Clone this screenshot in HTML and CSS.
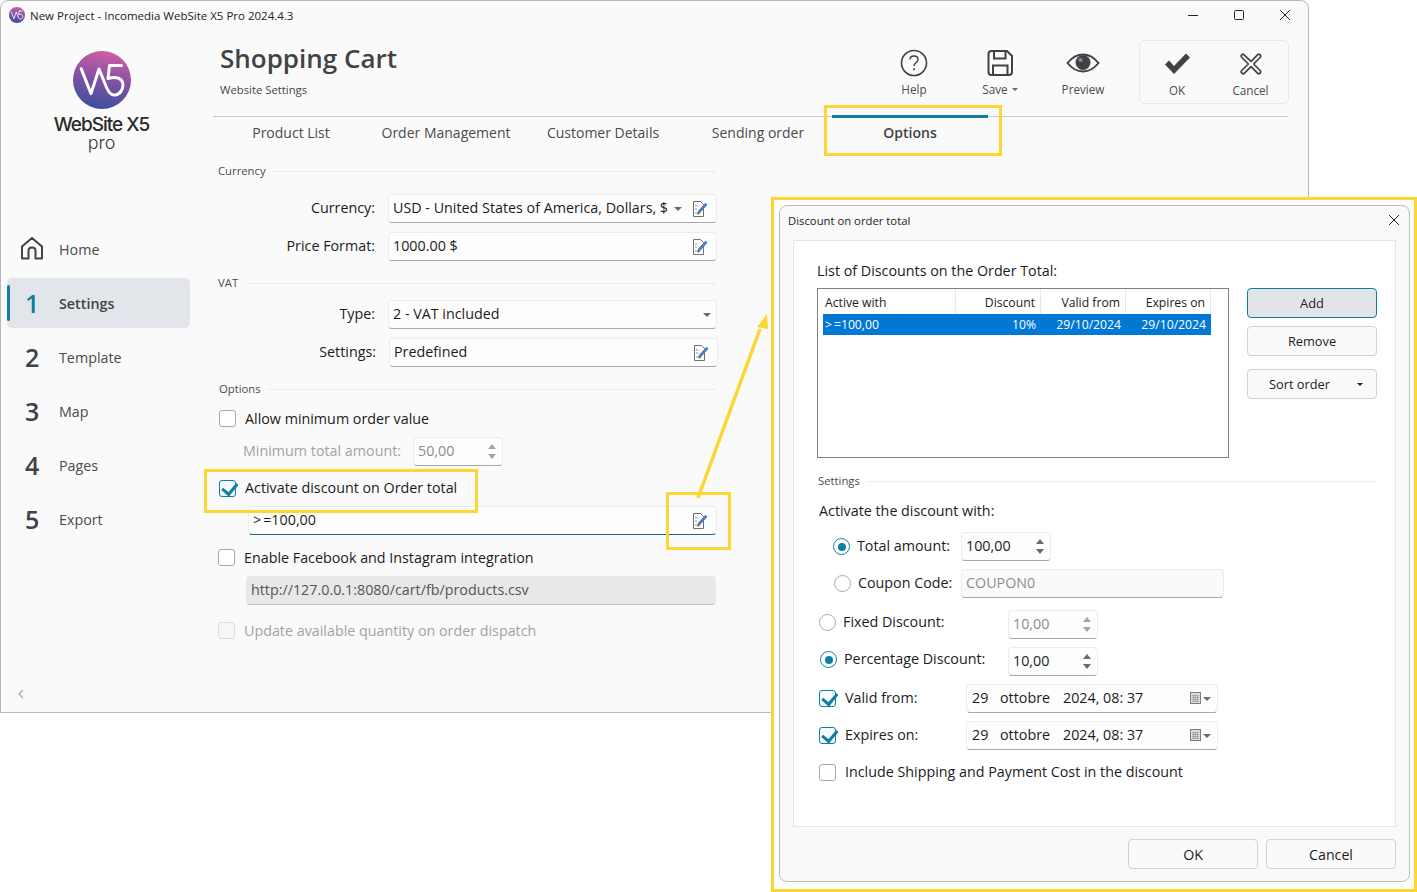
FILE: index.html
```html
<!DOCTYPE html>
<html lang="en">
<head>
<meta charset="utf-8">
<title>Incomedia WebSite X5 Pro</title>
<link rel="stylesheet" href="styles.css">
</head>
<body>
<svg class="defs" width="0" height="0" aria-hidden="true">
  <defs>
    <linearGradient id="logoGrad" x1="0.6" y1="0" x2="0.4" y2="1">
      <stop offset="0" stop-color="#d45da3"/>
      <stop offset="0.5" stop-color="#7f52a3"/>
      <stop offset="1" stop-color="#3b4f9e"/>
    </linearGradient>
    <symbol id="mark" viewBox="0 0 58 58">
      <circle cx="29" cy="29" r="29" fill="url(#logoGrad)"/>
      <path d="M8.200 17.700L18 42.600L26 18L33.800 37C36 42 39 44.500 42 44C47 43.500 50 38.500 50 34C50 28 44 24.500 35 27.500L36.500 14.500H48.500" fill="none" stroke="#fff" stroke-width="3" stroke-linecap="round" stroke-linejoin="round"/>
    </symbol>
    <symbol id="edit" viewBox="0 0 18 18">
      <path d="M2.500 1.500H9.500L12.500 4.500V16.500H2.500Z" fill="#fff" stroke="#707070"/>
      <path d="M4 6H6.500M4 9H6M4 13H7" stroke="#8f8f8f" fill="none"/>
      <path d="M7.500 12.500L15.500 3.800" stroke="#4f80bb" stroke-width="2.800" fill="none"/>
      <path d="M6.500 14.500L7 12L8.800 13.700Z" fill="#3b3b3b"/>
    </symbol>
    <symbol id="cal" viewBox="0 0 12 13">
      <rect x="0.500" y="0.500" width="10" height="11" fill="#dcdcdc" stroke="#7d7d7d"/>
      <path d="M2 3.500H9M2 5.500H9M2 7.500H9M2 9.500H9M3.500 3V10M5.500 3V10M7.500 3V10" stroke="#9a9a9a" stroke-width="0.700"/>
    </symbol>
  </defs>
</svg>

<div class="window">
  <header class="titlebar">
    <svg class="title-icon"><use href="#mark"/></svg>
    <span class="title-text">New Project - Incomedia WebSite X5 Pro 2024.4.3</span>
    <div class="win-controls">
      <svg width="12" height="12" viewBox="0 0 12 12"><path d="M1 6.500H11" stroke="#222" fill="none"/></svg>
      <svg width="12" height="12" viewBox="0 0 12 12"><rect x="1.500" y="1.500" width="9" height="9" rx="1" fill="none" stroke="#222"/></svg>
      <svg width="12" height="12" viewBox="0 0 12 12"><path d="M1 1L11 11M11 1L1 11" stroke="#222" fill="none"/></svg>
    </div>
  </header>

  <div class="body">
    <aside class="sidebar">
      <div class="brand">
        <svg class="brand-mark"><use href="#mark"/></svg>
        <div class="brand-name">WebSite X5</div>
        <div class="brand-sub">pro</div>
      </div>
      <nav class="nav">
        <a class="nav-item"><span class="nav-num nav-home"><svg width="24" height="25" viewBox="0 0 24 25"><path d="M2 22.500V10.500L12 2L22 10.500V22.500H15.500V14.500C15.500 12.500 14 11.500 12 11.500C10 11.500 8.500 12.500 8.500 14.500V22.500Z" fill="none" stroke="#3f4347" stroke-width="2" stroke-linejoin="round"/></svg></span><span>Home</span></a>
        <a class="nav-item active"><span class="nav-num">1</span><span>Settings</span></a>
        <a class="nav-item"><span class="nav-num">2</span><span>Template</span></a>
        <a class="nav-item"><span class="nav-num">3</span><span>Map</span></a>
        <a class="nav-item"><span class="nav-num">4</span><span>Pages</span></a>
        <a class="nav-item"><span class="nav-num">5</span><span>Export</span></a>
      </nav>
      <svg class="collapse" width="8" height="10" viewBox="0 0 8 10"><path d="M6 1L2 5L6 9" fill="none" stroke="#a8a8a8" stroke-width="1.300"/></svg>
    </aside>

    <main class="main">
      <div class="head">
        <div class="head-titles">
          <h1>Shopping Cart</h1>
          <p>Website Settings</p>
        </div>
        <div class="tools">
          <div class="tool tool-help">
            <svg width="30" height="30" viewBox="0 0 30 30"><circle cx="15" cy="15" r="12.500" fill="none" stroke="#3f4347" stroke-width="1.600"/><path d="M11 11.500C11 9 13 8 15 8C17.500 8 19 9.500 19 11.500C19 14.500 15 14.500 15 18" fill="none" stroke="#3f4347" stroke-width="1.500"/><circle cx="15" cy="21.300" r="1.100" fill="#3f4347"/></svg>
            <span>Help</span>
          </div>
          <div class="tool tool-save">
            <svg width="30" height="30" viewBox="0 0 30 30"><path d="M3.500 6C3.500 4 4.500 3 6.500 3H22L27 8V24C27 26 26 27 24 27H6.500C4.500 27 3.500 26 3.500 24Z" fill="none" stroke="#3f4347" stroke-width="2"/><path d="M9 3.500V10.500H20.500V3.500M8 26.500V17.500H22.500V26.500" fill="none" stroke="#3f4347" stroke-width="2"/></svg>
            <span>Save <i class="caret caret-grey"></i></span>
          </div>
          <div class="tool tool-preview">
            <svg width="34" height="30" viewBox="0 0 34 30"><path d="M1.500 15C7 8 12 6.500 17 6.500C22 6.500 27 8 32.500 15C27 22 22 23.500 17 23.500C12 23.500 7 22 1.500 15Z" fill="none" stroke="#3f4347" stroke-width="2"/><circle cx="17" cy="14.500" r="7.500" fill="#3f4347"/><circle cx="14.500" cy="12" r="2" fill="#8a8d90"/></svg>
            <span>Preview</span>
          </div>
          <div class="tool-group">
            <div class="tool tool-ok">
              <svg width="30" height="30" viewBox="0 0 30 30"><path d="M3 15.500L7 11.500L12 17L24 4.500L28 8.500L12 25Z" fill="#3f4347"/></svg>
              <span>OK</span>
            </div>
            <div class="tool tool-cancel">
              <svg width="30" height="30" viewBox="0 0 30 30"><path transform="translate(1.500 1.500) scale(0.900)" d="M7 4.500L15 12L22.500 4.500C24 3 27 6 25.500 7.500L18 15L25.500 22.500C27 24 24 27 22.500 25.500L15 18L7.500 25.500C6 27 3 24 4.500 22.500L12 15L4.500 7.500C3 6 5.500 3 7 4.500Z" fill="none" stroke="#3f4347" stroke-width="1.900" stroke-linejoin="round"/></svg>
              <span>Cancel</span>
            </div>
          </div>
        </div>
      </div>

      <div class="tabs">
        <div class="tab">Product List</div>
        <div class="tab">Order Management</div>
        <div class="tab">Customer Details</div>
        <div class="tab">Sending order</div>
        <div class="tab active">Options</div>
      </div>

      <div class="form">
        <div class="section section-currency"><span>Currency</span></div>
        <div class="form-row row-a">
          <label>Currency:</label>
          <div class="field"><span class="grow">USD - United States of America, Dollars, $</span><i class="caret caret-grey caret-near"></i><svg class="edit-icon"><use href="#edit"/></svg></div>
        </div>
        <div class="form-row row-b">
          <label>Price Format:</label>
          <div class="field"><span class="grow">1000.00 $</span><svg class="edit-icon"><use href="#edit"/></svg></div>
        </div>
        <div class="section section-vat"><span>VAT</span></div>
        <div class="form-row row-b">
          <label>Type:</label>
          <div class="field"><span class="grow">2 - VAT included</span><i class="caret caret-grey caret-end"></i></div>
        </div>
        <div class="form-row row-b row-shift">
          <label>Settings:</label>
          <div class="field"><span class="grow">Predefined</span><svg class="edit-icon"><use href="#edit"/></svg></div>
        </div>
        <div class="section section-options"><span>Options</span></div>

        <div class="check-row row-min">
          <i class="cb"></i><span>Allow minimum order value</span>
        </div>
        <div class="min-row">
          <label>Minimum total amount:</label>
          <div class="field spin muted"><span class="grow">50,00</span><i class="arrows"></i></div>
        </div>
        <div class="check-row row-activate">
          <i class="cb on"></i><span>Activate discount on Order total</span>
        </div>
        <div class="field wide focus"><span class="grow"><span class="gt">&gt;</span>=100,00</span><svg class="edit-icon"><use href="#edit"/></svg></div>
        <div class="check-row row-fb">
          <i class="cb"></i><span>Enable Facebook and Instagram integration</span>
        </div>
        <div class="field url"><span class="grow">http://127.0.0.1:8080/cart/fb/products.csv</span></div>
        <div class="check-row row-update disabled">
          <i class="cb"></i><span>Update available quantity on order dispatch</span>
        </div>
      </div>
    </main>
  </div>
</div>

<div class="mark-box mark-tab"></div>
<div class="mark-box mark-check"></div>
<div class="mark-box mark-edit"></div>
<svg class="arrow" width="90" height="190" viewBox="0 0 90 190">
  <path d="M3 188L65 19" fill="none" stroke="#fdd632" stroke-width="3.500"/>
  <path d="M72 4L73 19L62 17Z" fill="#fdd632"/>
</svg>

<div class="frame">
  <section class="dialog">
    <header class="dlg-title">
      <span>Discount on order total</span>
      <svg width="12" height="12" viewBox="0 0 12 12"><path d="M1 1L11 11M11 1L1 11" stroke="#222" fill="none"/></svg>
    </header>
    <div class="panel">
      <div class="list-title">List of Discounts on the Order Total:</div>
      <div class="list-wrap">
        <div class="list">
          <div class="list-row list-head">
            <span>Active with</span><span>Discount</span><span>Valid from</span><span>Expires on</span>
          </div>
          <div class="list-row list-sel">
            <span><span class="gt">&gt;</span>=100,00</span><span>10%</span><span>29/10/2024</span><span>29/10/2024</span>
          </div>
        </div>
        <div class="list-btns">
          <button class="btn btn-add">Add</button>
          <button class="btn btn-remove">Remove</button>
          <button class="btn btn-sort"><span>Sort order</span><i class="caret caret-dark"></i></button>
        </div>
      </div>
      <div class="section section-dlg"><span>Settings</span></div>
      <div class="activate-title">Activate the discount with:</div>

      <div class="opt opt-total">
        <i class="radio on"></i><label>Total amount:</label>
        <div class="field spin"><span class="grow">100,00</span><i class="arrows"></i></div>
      </div>
      <div class="opt opt-coupon">
        <i class="radio"></i><label>Coupon Code:</label>
        <div class="field coupon"><span class="grow">COUPON0</span></div>
      </div>
      <div class="opt opt-fixed">
        <i class="radio"></i><label>Fixed Discount:</label>
        <div class="field spin muted"><span class="grow">10,00</span><i class="arrows"></i></div>
      </div>
      <div class="opt opt-percent">
        <i class="radio on"></i><label>Percentage Discount:</label>
        <div class="field spin"><span class="grow">10,00</span><i class="arrows"></i></div>
      </div>
      <div class="opt opt-valid">
        <i class="cb on"></i><label>Valid from:</label>
        <div class="field date"><span class="grow date-parts"><span>29</span><span>ottobre</span><span>2024, 08: 37</span></span><svg class="cal-icon"><use href="#cal"/></svg><i class="caret caret-grey"></i></div>
      </div>
      <div class="opt opt-expires">
        <i class="cb on"></i><label>Expires on:</label>
        <div class="field date"><span class="grow date-parts"><span>29</span><span>ottobre</span><span>2024, 08: 37</span></span><svg class="cal-icon"><use href="#cal"/></svg><i class="caret caret-grey"></i></div>
      </div>
      <div class="opt opt-include">
        <i class="cb"></i><label>Include Shipping and Payment Cost in the discount</label>
      </div>
    </div>
    <footer class="dlg-foot">
      <button class="btn btn-foot">OK</button>
      <button class="btn btn-foot">Cancel</button>
    </footer>
  </section>
</div>
</body>
</html>
```

FILE: styles.css
```css
* { box-sizing: border-box; }
html, body { margin: 0; padding: 0; }
body {
  position: relative;
  width: 1417px;
  height: 892px;
  overflow: hidden;
  background: #fff;
  font-family: "Open Sans", "Noto Sans", sans-serif;
  font-size: 14.300px;
  color: #1c1c1c;
}
.defs { position: absolute; }
i { display: block; font-style: normal; flex: none; }
label { display: block; }
.gt { margin-right: 2px; }

/* main window */
.window {
  position: absolute;
  left: 0;
  top: 0;
  width: 1309px;
  height: 713px;
  display: flex;
  flex-direction: column;
  background: #fafafa;
  border: 1px solid #b9b9b9;
  border-radius: 8px 8px 0 0;
}
.titlebar {
  flex: none;
  height: 31px;
  display: flex;
  align-items: center;
  padding: 0 0 3px 8px;
}
.title-icon { width: 16px; height: 16px; margin-right: 5px; }
.title-text { font-size: 11.500px; color: #222; }
.win-controls {
  margin-left: auto;
  display: flex;
  gap: 34px;
  padding-right: 17px;
}
.body { flex: 1; display: flex; min-height: 0; }

/* sidebar */
.sidebar {
  position: relative;
  flex: none;
  width: 212px;
  display: flex;
  flex-direction: column;
  padding: 0 23px 0 6px;
}
.brand {
  height: 192px;
  display: flex;
  flex-direction: column;
  align-items: center;
  padding-top: 19px;
  margin-left: 6px;
}
.brand-mark { flex: none; width: 58px; height: 58px; }
.brand-name {
  margin-top: 5px;
  font-family: Inter, "Open Sans", sans-serif;
  font-size: 19px;
  font-weight: 500;
  letter-spacing: -1px;
  line-height: 22px;
  color: #2a2a2a;
}
.brand-sub {
  font-family: Inter, "Open Sans", sans-serif;
  font-size: 18px;
  font-weight: 300;
  line-height: 14px;
  color: #3a3a3a;
}
.nav { display: flex; flex-direction: column; gap: 4px; }
.nav-item {
  position: relative;
  display: flex;
  align-items: center;
  height: 50px;
  border-radius: 5px;
  color: #4b4b4b;
  font-size: 14.300px;
}
.nav-num {
  flex: none;
  width: 52px;
  padding-left: 18px;
  font-size: 25px;
  font-weight: 600;
  color: #3f4347;
  line-height: 30px;
}
.nav-home { padding-left: 13px; }
.nav-num svg { display: block; margin-top: -2px; }
.nav-item.active { background: #e2e6ea; font-weight: 600; color: #3f4347; }
.nav-item.active .nav-num { color: #0f7ea5; font-weight: 600; }
.nav-item.active::before {
  content: "";
  position: absolute;
  left: 0;
  top: 7px;
  bottom: 7px;
  width: 3px;
  border-radius: 2px;
  background: #0f7ea5;
}
.collapse { position: absolute; left: 16px; bottom: 13px; }

/* main column */
.main { flex: 1; min-width: 0; padding-right: 20px; }
.head { height: 84px; display: flex; justify-content: space-between; }
.head-titles { padding-left: 7px; }
h1 {
  margin: 7px 0 0;
  font-size: 26px;
  font-weight: 600;
  line-height: 38px;
  color: #3f4347;
}
.head-titles p { margin: 5px 0 0; font-size: 11.300px; line-height: 16px; color: #444; }
.tools { display: flex; padding-top: 8px; margin-right: -1px; }
.tool {
  display: flex;
  flex-direction: column;
  align-items: center;
  height: 63px;
  padding-top: 8px;
  font-size: 11.700px;
  color: #4b4b4b;
}
.tool svg { display: block; height: 30px; }
.tool span { display: flex; align-items: center; gap: 4px; margin-top: 2px; line-height: 18px; }
.tool-help, .tool-save { width: 86px; }
.tool-preview { width: 80px; margin-right: 16px; }
.tool-group {
  display: flex;
  width: 150px;
  height: 64px;
  border: 1px solid #e9e9e9;
  border-radius: 5px;
}
.tool-ok { width: 74px; }
.tool-cancel { width: 73px; }

/* tabs */
.tabs { display: flex; height: 34px; border-top: 1px solid #c9c9c9; }
.tab {
  position: relative;
  display: flex;
  align-items: center;
  justify-content: center;
  height: 31px;
  font-size: 14px;
  color: #4b4b4b;
}
.tab:nth-child(1) { width: 156px; }
.tab:nth-child(2) { width: 154px; }
.tab:nth-child(3) { width: 160px; }
.tab:nth-child(4) { width: 150px; }
.tab:nth-child(5) { width: 154px; }
.tab.active { font-weight: 600; color: #3f4347; }
.tab.active::before {
  content: "";
  position: absolute;
  left: -1px;
  right: -1px;
  top: -2px;
  height: 3px;
  background: #0f7ea5;
}

/* form column */
.form { width: 498px; margin-left: 5px; }
.section { display: flex; align-items: center; height: 16px; font-size: 11.300px; color: #4b4b4b; }
.section span { margin-top: -2px; }
.section::after { content: ""; flex: 1; height: 1px; margin-left: 8px; background: #ebebeb; }
.section-currency { margin-top: 13px; }
.section-vat { margin-top: 14px; }
.section-options { margin-top: 14px; margin-left: 1px; }
.form-row { display: flex; align-items: center; }
.form-row label { flex: none; width: 157px; margin-right: 13px; padding-bottom: 2px; text-align: right; }
.form-row .field { width: 329px; flex: none; }
.row-a { margin-top: 15px; }
.row-b { margin-top: 9px; }
.row-shift { padding-left: 1px; }

.field {
  display: flex;
  align-items: center;
  height: 29px;
  padding: 0 10px 0 4px;
  background: #fdfdfd;
  border: 1px solid #ececec;
  border-bottom-color: #a8a8a8;
  border-radius: 4px;
}
.grow { flex: 1; min-width: 0; padding-bottom: 2px; white-space: nowrap; }
.edit-icon { width: 18px; height: 18px; margin-right: -3px; }
.caret {
  width: 0;
  height: 0;
  border-left: 4px solid transparent;
  border-right: 4px solid transparent;
  border-top: 4px solid #666;
}
.caret-grey { border-top-color: #6a6a6a; }
.caret-dark { border-left-width: 3px; border-right-width: 3px; border-top: 3px solid #222; }
.tool .caret { border-left-width: 3px; border-right-width: 3px; border-top-width: 3px; }
.caret-near { margin-right: 9px; margin-left: -1px; }
.caret-end { margin-right: -5px; }

.check-row { display: flex; align-items: center; height: 17px; }
.check-row span { margin-left: 9px; white-space: nowrap; }
.cb {
  position: relative;
  width: 17px;
  height: 17px;
  background: #fff;
  border: 1px solid #a9a9a9;
  border-radius: 3px;
}
.cb.on { border-color: #0f7ea5; background: #f7fbfd; }
.cb.on::after {
  content: "";
  position: absolute;
  left: 4.500px;
  top: -1px;
  width: 7px;
  height: 11.500px;
  border: solid #0f7ea5;
  border-width: 0 3px 3px 0;
  transform: rotate(40deg);
}
.row-min { margin-top: 13px; margin-left: 1px; }
.min-row { display: flex; align-items: center; margin-top: 10px; margin-left: 25px; }
.min-row label { width: 170px; padding-bottom: 2px; color: #a2a2a2; white-space: nowrap; }
.spin { width: 90px; padding-right: 0; }
.muted { color: #8d8d8d; }
.arrows { position: relative; width: 20px; height: 100%; }
.arrows::before, .arrows::after {
  content: "";
  position: absolute;
  left: 6px;
  width: 0;
  height: 0;
  border-left: 4px solid transparent;
  border-right: 4px solid transparent;
}
.arrows::before { top: 6px; border-bottom: 5px solid #6a6a6a; }
.arrows::after { bottom: 6px; border-top: 5px solid #6a6a6a; }
.muted .arrows::before { border-bottom-color: #a5a5a5; }
.muted .arrows::after { border-top-color: #a5a5a5; }
.row-activate { margin-top: 14px; margin-left: 1px; }
.row-activate span { margin-bottom: 2px; }
.wide { margin: 9px 0 0 30px; width: 469px; }
.focus { border-bottom: 1px solid #0f6e8f; }
.row-fb { margin-top: 14px; }
.url { margin: 10px 0 0 28px; width: 470px; background: #e8e8e8; border-color: #e8e8e8; border-bottom-color: #c4c4c4; color: #555; }
.row-update { margin-top: 17px; }
.disabled { color: #a2a2a2; }
.disabled .cb { background: #f6f6f6; border-color: #dcdcdc; }

/* annotations */
.mark-box { position: absolute; border: 3px solid #fdd632; }
.mark-tab { left: 824px; top: 105px; width: 178px; height: 51px; }
.mark-check { left: 204px; top: 469px; width: 274px; height: 44px; }
.mark-edit { left: 666px; top: 492px; width: 65px; height: 58px; }
.arrow { position: absolute; left: 695px; top: 310px; }

/* dialog */
.frame {
  position: absolute;
  left: 771px;
  top: 197px;
  width: 646px;
  height: 695px;
  padding: 5px 4px 7px 5px;
  background: #fff;
  border: 3px solid #fdd632;
}
.dialog {
  display: flex;
  flex-direction: column;
  height: 100%;
  background: #f9f9f9;
  border: 1px solid #bcbcbc;
  border-radius: 8px;
}
.dlg-title {
  flex: none;
  height: 34px;
  display: flex;
  align-items: center;
  justify-content: space-between;
  padding: 0 9px 6px 8px;
  font-size: 11.300px;
}
.panel {
  flex: none;
  height: 587px;
  margin: 0 13px;
  padding-left: 23px;
  background: #fff;
  border: 1px solid #e6e6e6;
}
.list-title { margin-top: 21px; height: 18px; line-height: 18px; }
.list-wrap { display: flex; gap: 18px; margin-top: 8px; }
.list {
  width: 412px;
  height: 170px;
  padding: 0 17px 0 5px;
  background: #fff;
  border: 1px solid #808080;
  font-size: 12.200px;
}
.list-row {
  display: grid;
  grid-template-columns: 133px 85px 85px 85px;
  align-items: center;
}
.list-row > span { padding-right: 5px; text-align: right; white-space: nowrap; }
.list-row > span:first-child { padding-left: 2px; text-align: left; }
.list-head { height: 25px; }
.list-head > span { line-height: 27px; height: 25px; border-right: 1px solid #e8e8e8; }
.list-sel { height: 21px; background: #0078d4; color: #fff; }
.list-btns { display: flex; flex-direction: column; width: 130px; }
.btn {
  display: flex;
  align-items: center;
  justify-content: center;
  height: 30px;
  padding: 0;
  background: #fafafa;
  border: 1px solid #d2d2d2;
  border-radius: 4px;
  font-family: inherit;
  font-size: 12.800px;
  color: #1c1c1c;
}
.btn-add { background: #e1e5e9; border-color: #0f7ea5; }
.btn-remove { margin-top: 8px; }
.btn-sort { margin-top: 13px; justify-content: space-between; padding: 0 13px 0 21px; }
.section-dlg { margin: 15px 18px 0 1px; }
.activate-title { margin: 13px 0 0 2px; height: 18px; line-height: 18px; }
.opt { display: flex; align-items: center; height: 29px; }
.opt label { padding-bottom: 2px; white-space: nowrap; }
.opt .radio, .opt .cb { margin-right: 7px; }
.radio {
  position: relative;
  width: 17px;
  height: 17px;
  background: #fff;
  border: 1px solid #a9a9a9;
  border-radius: 50%;
}
.radio.on { border-color: #0f7ea5; }
.radio.on::after {
  content: "";
  position: absolute;
  left: 3.500px;
  top: 3.500px;
  width: 8px;
  height: 8px;
  border-radius: 50%;
  background: #0f7ea5;
}
.opt-total { margin: 12px 0 0 16px; }
.opt-total label { width: 104px; }
.opt-coupon { margin: 8px 0 0 17px; }
.opt-coupon label { width: 103px; }
.coupon { width: 263px; color: #8d8d8d; background: #fafafa; }
.opt-fixed { margin: 12px 0 0 2px; }
.opt-fixed label { width: 165px; }
.opt-percent { margin: 8px 0 0 3px; }
.opt-percent label { width: 164px; }
.opt-fixed label, .opt-fixed .radio, .opt-percent label, .opt-percent .radio { margin-bottom: 4px; }
.opt-valid { margin: 8px 0 0 2px; }
.opt-expires { margin: 8px 0 0 2px; }
.opt-valid .cb, .opt-expires .cb, .opt-include .cb { margin-right: 9px; }
.opt-valid label, .opt-expires label { width: 121px; }
.date { width: 252px; padding-left: 5px; padding-right: 6px; }
.date-parts { display: flex; }
.date-parts span:nth-child(1) { width: 28px; }
.date-parts span:nth-child(2) { width: 63px; }
.cal-icon { width: 12px; height: 13px; margin-right: 1px; }
.opt-include { margin: 14px 0 0 2px; height: 17px; }
.dlg-foot {
  flex: none;
  display: flex;
  justify-content: flex-end;
  gap: 8px;
  margin: 12px 13px 0 0;
}
.btn-foot { width: 130px; font-size: 14.200px; }
```
